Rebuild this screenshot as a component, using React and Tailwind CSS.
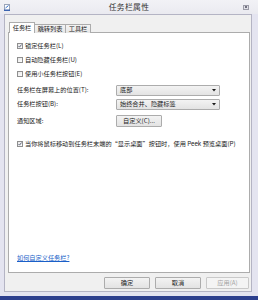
import React from 'react';

const FONT = { fontFamily: '"Noto Sans CJK SC", "Liberation Sans", sans-serif' };

function Check({ checked }) {
  return (
    <span className="w-[6px] h-[6px] shrink-0 border border-[#8f8f8f] bg-gradient-to-br from-[#e6e6e6] to-white flex items-center justify-center">
      {checked && (
        <svg width="6" height="6" viewBox="0 0 6 6" className="-mt-[1px]">
          <path d="M0.8 3.2 L2.3 4.7 L5.3 0.8" fill="none" stroke="#2a3350" strokeWidth="1.1" />
        </svg>
      )}
    </span>
  );
}

function CheckRow({ checked, label, className = '' }) {
  return (
    <div className={`flex items-center gap-[2px] h-[6px] ${className}`}>
      <Check checked={checked} />
      <span className="leading-none whitespace-nowrap">{label}</span>
    </div>
  );
}

function Select({ value }) {
  return (
    <div className="w-[104px] h-[11px] border border-[#acacac] rounded-[1px] bg-gradient-to-b from-[#f3f3f3] to-[#e3e3e3] flex items-center justify-between pl-[3px] pr-[3px]">
      <span className="leading-none whitespace-nowrap">{value}</span>
      <svg width="4" height="3" viewBox="0 0 4 3"><path d="M0 0 H4 L2 2.5 Z" fill="#1a1a1a" /></svg>
    </div>
  );
}

function Button({ children, disabled, className = '' }) {
  return (
    <div
      className={`h-[12px] border rounded-[1px] flex items-center justify-center leading-none ${
        disabled
          ? 'border-[#c9c9c9] bg-[#f4f4f4] text-[#a3a3a3]'
          : 'border-[#acacac] bg-gradient-to-b from-[#f3f3f3] to-[#e3e3e3] text-[#222]'
      } ${className}`}
    >
      {children}
    </div>
  );
}

export default function App() {
  return (
    <div className="w-[258px] h-[300px] flex flex-col bg-[#e4e4f0] text-[6.2px] text-[#222] overflow-hidden" style={FONT}>
      {/* Title bar */}
      <div className="h-[14px] shrink-0 grid grid-cols-[1fr_auto_1fr] items-center bg-gradient-to-b from-[#f2f2f6] to-[#eaeaf0]">
        <div className="pl-[4px] flex items-center">
          <svg width="6" height="7" viewBox="0 0 6 7">
            <rect x="0.5" y="0.5" width="5" height="6" fill="#fff" stroke="#9aa4b8" strokeWidth="1" />
            <path d="M1.5 4 L4.5 1.5" stroke="#2f6cc8" strokeWidth="1" />
            <rect x="0" y="5.5" width="6" height="1.5" fill="#3b63b0" />
          </svg>
        </div>
        <div className="text-[7.8px] leading-none text-[#333] tracking-[0.3px]">任务栏属性</div>
        <div className="flex justify-end pr-[9px]">
          <div className="w-[6px] h-[5px] border border-[#9c9ca8] bg-[#e0e0e6] flex items-center justify-center">
            <div className="w-[2px] h-[2px] bg-[#707080]" />
          </div>
        </div>
      </div>

      {/* Client area */}
      <div className="flex-1 ml-[4px] mr-[6px] mb-[4px] bg-[#f0f0f0] border border-[#b4b4c4] flex flex-col pl-[3px] pr-[1px] pt-[7px] pb-[2px]">
        {/* Tabs */}
        <div className="flex items-end h-[11px] pl-[1px] relative z-10">
          <div className="h-[11px] w-[26px] border border-b-0 border-[#acacac] bg-white flex items-center justify-center leading-none">任务栏</div>
          <div className="h-[9px] w-[31px] border border-l-0 border-b-0 border-[#acacac] bg-gradient-to-b from-[#f3f3f3] to-[#e6e6e6] flex items-center justify-center leading-none">跳转列表</div>
          <div className="h-[9px] w-[25px] border border-l-0 border-b-0 border-[#acacac] bg-gradient-to-b from-[#f3f3f3] to-[#e6e6e6] flex items-center justify-center leading-none">工具栏</div>
        </div>

        {/* Panel */}
        <div className="h-[241px] -mt-[1px] border border-[#acacac] bg-white flex flex-col pl-[8px] pt-[10px]">
          <CheckRow checked label="锁定任务栏(L)" />
          <CheckRow label="自动隐藏任务栏(U)" className="mt-[8px]" />
          <CheckRow label="使用小任务栏按钮(E)" className="mt-[8px]" />

          <div className="flex items-center mt-[8px]">
            <span className="w-[99px] leading-none whitespace-nowrap">任务栏在屏幕上的位置(T):</span>
            <Select value="底部" />
          </div>
          <div className="flex items-center mt-[3px]">
            <span className="w-[99px] leading-none whitespace-nowrap">任务栏按钮(B):</span>
            <Select value="始终合并、隐藏标签" />
          </div>
          <div className="flex items-center mt-[5px]">
            <span className="w-[99px] leading-none whitespace-nowrap">通知区域:</span>
            <Button className="w-[46px]">自定义(C)...</Button>
          </div>

          <CheckRow checked label="当你将鼠标移动到任务栏末端的“显示桌面”按钮时，使用 Peek 预览桌面(P)" className="mt-[14px]" />

          <div className="mt-auto mb-[10px]">
            <span className="text-[#1a5fc8] underline leading-none">如何自定义任务栏?</span>
          </div>
        </div>

        {/* Buttons */}
        <div className="flex justify-end gap-[5px] mt-[4px] pr-[1px]">
          <Button className="w-[46px]">确定</Button>
          <Button className="w-[46px]">取消</Button>
          <Button disabled className="w-[43px]">应用(A)</Button>
        </div>
      </div>

      {/* Taskbar strip */}
      <div className="h-[4px] shrink-0 bg-[#2c3f8e]" />
    </div>
  );
}
